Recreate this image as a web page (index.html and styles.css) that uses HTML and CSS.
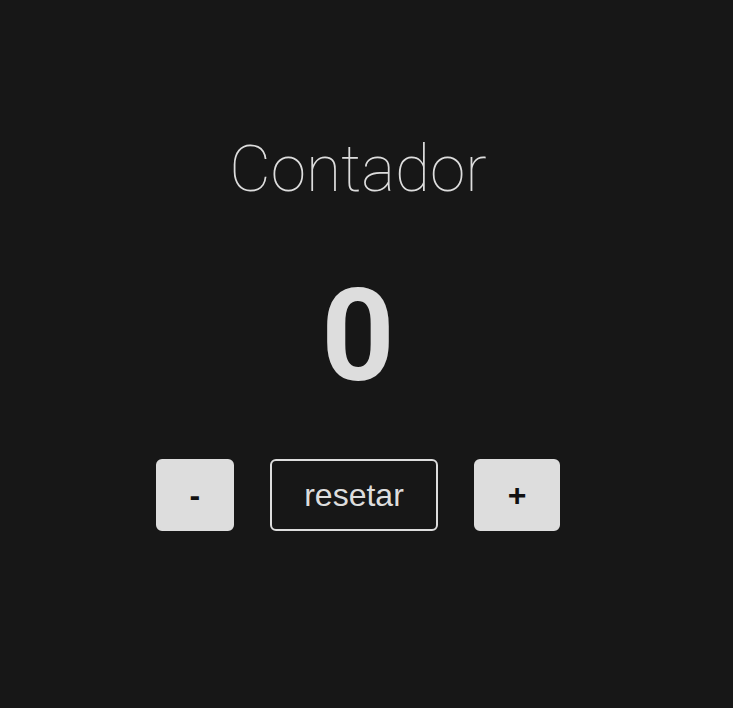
FILE: index.html
```html
<!DOCTYPE html>
<html lang="pt">
<head>
<meta charset="utf-8">
<title>Contador</title>
<link rel="stylesheet" href="styles.css">
</head>
<body>
<main class="app">
  <h1 class="title">Contador</h1>
  <div class="count">0</div>
  <div class="controls">
    <button class="btn btn-solid">-</button>
    <button class="btn btn-outline">resetar</button>
    <button class="btn btn-solid">+</button>
  </div>
</main>
</body>
</html>
```
FILE: styles.css
```css
html, body {
  margin: 0;
  height: 100%;
  background: #171717;
}
body {
  padding-right: 17px;
  box-sizing: border-box;
}
.app {
  display: flex;
  flex-direction: column;
  align-items: center;
  padding-top: 128px;
}
.title {
  margin: 0;
  font-family: Roboto, sans-serif;
  font-weight: 100;
  font-size: 64px;
  line-height: 84px;
  color: #dddddd;
}
.count {
  margin-top: 49px;
  font-family: Roboto, sans-serif;
  font-weight: 700;
  font-size: 128px;
  line-height: 150px;
  color: #dddddd;
}
.controls {
  margin-top: 48px;
  display: flex;
  gap: 36px;
}
.btn {
  font-family: "Liberation Sans", Arial, sans-serif;
  font-size: 32px;
  padding: 16px 32px;
  border: 2px solid #dddddd;
  border-radius: 6px;
  line-height: 36px;
  cursor: pointer;
}
.btn-solid {
  background: #dddddd;
  color: #111111;
  font-weight: 700;
}
.btn-outline {
  background: transparent;
  color: #dddddd;
}
```
